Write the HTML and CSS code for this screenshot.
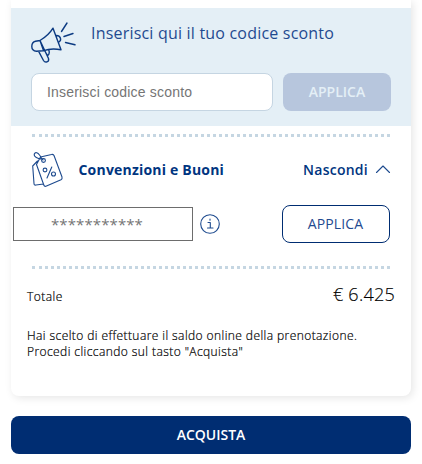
FILE: index.html
```html
<!DOCTYPE html>
<html lang="it">
<head>
<meta charset="utf-8">
<title>Riepilogo</title>
<link rel="stylesheet" href="styles.css">
</head>
<body>
<main class="summary">
  <section class="card">
    <div class="discount">
      <div class="discount-head">
        <svg class="megaphone" width="46" height="42" viewBox="0 0 46 42">
          <path d="M9 18.500C15 15 18.800 11.500 22 6.200L30 27.800C23 26.200 18 26.600 12 28.800L5.500 29.200C2.500 29 .8 27 .8 24.500C.8 21 2.500 19.800 4.500 19.300ZM9 18.500L17.500 36.500C18.500 40.300 14 41 12.500 38.500L7.500 29.200M9 18.500L12.500 28.500M13.500 28.500L16.500 33.500C18.800 32.500 18.500 29 17.500 27.500M25.500 13.500C29.500 13.500 31 18 28 20M30.500 9.500L36 1M33 14.500L42 11.500M34.500 20.500L44 22.800"/>
        </svg>
        <h2 class="discount-title">Inserisci qui il tuo codice sconto</h2>
      </div>
      <div class="discount-form">
        <input class="code-input" type="text" placeholder="Inserisci codice sconto">
        <button class="btn btn-disabled" disabled>APPLICA</button>
      </div>
    </div>
    <div class="dots"></div>
    <div class="voucher-head">
      <svg class="tags" width="33" height="37" viewBox="0 0 33 37">
        <path d="M9.500 6L20.500 3.500Q22 3 23 4.500L31 26Q31.500 28 30 28.800L15.500 35Q13.500 36 12.800 34L5.500 13.500ZM6.500 10L1.700 15L3 32.500Q3 34.500 5 34L12.500 33M10.500 8C7 7.500 2.500 6 3.300 3C4.500 .5 7 2 8.500 4L12 9M20.800 16L16 27"/>
        <circle cx="12.500" cy="9.500" r="1.900"/><circle cx="14" cy="19" r="1.900"/><circle cx="22.500" cy="23" r="2"/>
      </svg>
      <h3 class="voucher-title">Convenzioni e Buoni</h3>
      <a class="toggle">Nascondi</a>
      <svg class="chevron" width="16" height="10" viewBox="0 0 16 10"><path d="M1.500 8.500L8 2L14.500 8.500"/></svg>
    </div>
    <div class="voucher-form">
      <input class="voucher-input" type="text" placeholder="***********">
      <svg class="info" width="20" height="20" viewBox="0 0 20 20"><circle cx="10" cy="10" r="9.300"/><path d="M8 8.500H10.300V14M7.500 14H13M10 5V6.300"/></svg>
      <button class="btn btn-outline">APPLICA</button>
    </div>
    <div class="dots"></div>
    <div class="total"><span class="total-label">Totale</span><span class="total-value">€ 6.425</span></div>
    <p class="note">Hai scelto di effettuare il saldo online della prenotazione.<br>Procedi cliccando sul tasto "Acquista"</p>
  </section>
  <button class="buy">ACQUISTA</button>
</main>
</body>
</html>
```
FILE: styles.css
```css
* { box-sizing: border-box; }
body { margin: 0; background: #fff; font-family: "Open Sans", sans-serif; color: #000; }
svg { fill: none; stroke: #1d4a8e; stroke-width: 1.3; stroke-linecap: round; stroke-linejoin: round; flex: none; }
h2, h3, p { margin: 0; }
button { font-family: inherit; padding: 0; }
.summary { width: 400px; margin-left: 11px; }
.card { height: 396px; padding-top: 8px; border-radius: 0 0 8px 8px; box-shadow: 2px 2px 8px rgba(0, 0, 0, .1); }
.discount { height: 118px; padding: 14px 20px 0; background: #e4eff6; }
.discount-head { display: flex; height: 51px; }
.megaphone { stroke: #0b3a82; stroke-width: 1.4; }
.discount-title { margin-left: 14px; font-size: 16px; font-weight: 400; line-height: 22px; letter-spacing: .2px; color: #1f4a90; white-space: nowrap; }
.discount-form { display: flex; gap: 10px; }
.code-input { width: 242px; height: 38px; padding: 0 15px; border: 1px solid #c5d5e2; border-radius: 8px; background: #fff; font: 14px "Liberation Sans", sans-serif; letter-spacing: .19px; }
.code-input::placeholder { color: #757575; opacity: 1; }
.btn { width: 108px; height: 38px; padding-bottom: 2px; border-radius: 8px; font-size: 14px; }
.btn-disabled { border: 0; background: #b7c6dd; color: #e4eff6; font-weight: 600; }
.dots { display: flex; height: 3px; margin: 8px 21px 0; }
.dots::before { content: ""; width: 3px; background: #c5d6e2; }
.dots::after { content: ""; flex: 1; margin-left: 4px; background: repeating-linear-gradient(90deg, #c5d6e2 0 3px, transparent 3px 6px); }
.voucher-head { display: flex; align-items: center; height: 66px; padding: 0 20px 2px; color: #003580; }
.tags { stroke-width: 1.1; }
.voucher-title { margin-left: 14.5px; font-size: 14px; font-weight: 700; letter-spacing: .2px; white-space: nowrap; }
.toggle { margin-left: auto; font-size: 14px; font-weight: 600; letter-spacing: .25px; }
.chevron { margin-left: 7px; stroke-width: 1.1; }
.voucher-form { display: flex; align-items: center; height: 42px; padding: 0 21px 0 2px; }
.voucher-input { width: 180px; height: 34px; padding: 0 0 0 37px; border: 1px solid #6d6d6d; background: #fff; font: 15px "Open Sans", sans-serif; letter-spacing: .1px; }
.voucher-input::placeholder { color: #757575; opacity: 1; }
.info { margin-left: 7px; stroke-width: 1.1; }
.btn-outline { margin-left: auto; padding-right: 1px; border: 1px solid #002d72; background: #fff; color: #1f4a90; letter-spacing: .1px; }
.voucher-form + .dots { margin-top: 21px; }
.total { display: flex; justify-content: space-between; align-items: center; height: 50px; padding: 0 16px; }
.total-label { font-size: 12px; font-weight: 300; letter-spacing: .45px; padding-top: 4px; -webkit-text-stroke: .2px #000; }
.total-value { font-size: 18px; font-weight: 300; letter-spacing: .25px; -webkit-text-stroke: .15px #000; }
.note { padding: 9px 16px 0; font-size: 12px; font-weight: 300; letter-spacing: .42px; line-height: 16px; white-space: nowrap; -webkit-text-stroke: .2px #000; }
.buy { display: block; width: 400px; height: 38px; margin-top: 20px; padding-bottom: 1px; border: 0; border-radius: 8px; background: #002d72; color: #fff; font-size: 14px; font-weight: 600; }
```
